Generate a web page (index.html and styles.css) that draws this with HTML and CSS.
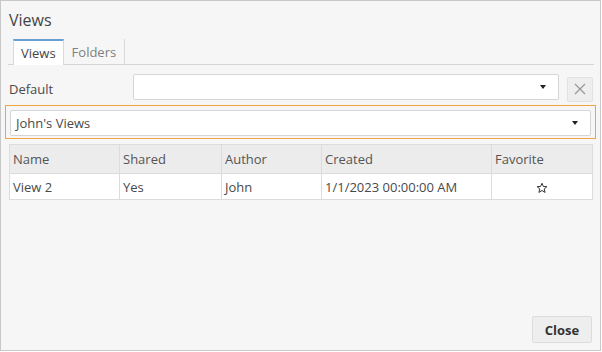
FILE: index.html
```html
<!DOCTYPE html>
<html lang="en">
<head>
  <meta charset="UTF-8">
  <title>Views</title>
  <link rel="stylesheet" href="styles.css">
</head>
<body>
  <div class="dialog">
    <h1 class="dialog-title">Views</h1>

    <ul class="tabs">
      <li class="tab active">Views</li>
      <li class="tab">Folders</li>
    </ul>

    <div class="default-row">
      <label class="default-label">Default</label>
      <div class="select default-select"><span></span><span class="caret"></span></div>
      <button class="clear-btn">
        <svg width="14" height="14" viewBox="0 0 14 14"><path d="M2 2 L12 12 M12 2 L2 12" stroke="#999" stroke-width="1.3" fill="none"/></svg>
      </button>
    </div>

    <div class="folder-box">
      <div class="select"><span>John's Views</span><span class="caret"></span></div>
    </div>

    <table class="views-table">
      <thead>
        <tr>
          <th class="col-name">Name</th>
          <th class="col-shared">Shared</th>
          <th class="col-author">Author</th>
          <th class="col-created">Created</th>
          <th class="col-fav">Favorite</th>
        </tr>
      </thead>
      <tbody>
        <tr>
          <td>View 2</td>
          <td>Yes</td>
          <td>John</td>
          <td>1/1/2023 00:00:00 AM</td>
          <td class="fav-cell">
            <svg class="star" width="12" height="12" viewBox="0 0 24 24"><path d="M12 2.5 L14.8 9 L21.8 9.4 L16.4 13.9 L18.2 20.8 L12 17 L5.8 20.8 L7.6 13.9 L2.2 9.4 L9.2 9 Z" fill="none" stroke="#333" stroke-width="2" stroke-linejoin="round"/></svg>
          </td>
        </tr>
      </tbody>
    </table>

    <div class="footer">
      <button class="close-btn">Close</button>
    </div>
  </div>
</body>
</html>
```

FILE: styles.css
```css
body {
  margin: 0;
  font-family: "Open Sans", Arial, sans-serif;
  font-size: 13px;
  color: #4a4a4a;
}

.dialog {
  width: 599px;
  height: 349px;
  border: 1px solid #c8c8c8;
  background-color: #f6f6f6;
  display: flex;
  flex-direction: column;
}

.dialog-title {
  margin: 0;
  padding: 8px 0 0 8px;
  font-size: 16px;
  font-weight: normal;
  color: #444;
  line-height: 22px;
}

.tabs {
  list-style: none;
  margin: 8px 6px 0 7px;
  padding: 0 0 0 5px;
  display: flex;
  border-bottom: 1px solid #d4d4d4;
  height: 25px;
}

.tab {
  padding: 0 8px;
  line-height: 26px;
  color: #808080;
  border-right: 1px solid #d9d9d9;
  height: 25px;
  box-sizing: border-box;
}

.tab.active {
  background-color: #fff;
  color: #444;
  border-top: 2px solid #6b9fcf;
  border-left: 1px solid #d9d9d9;
  line-height: 24px;
  height: 26px;
  padding: 0 7px;
}

.default-row {
  display: flex;
  align-items: center;
  margin: 8px 0 0 8px;
  height: 28px;
}

.default-label {
  width: 124px;
  padding-top: 4px;
}

.select {
  display: flex;
  align-items: center;
  justify-content: space-between;
  height: 26px;
  box-sizing: border-box;
  background-color: #fff;
  border: 1px solid #d6d6d6;
  border-radius: 2px;
  padding: 0 12px 0 6px;
}

.default-select {
  width: 426px;
}

.caret {
  width: 0;
  height: 0;
  border-left: 3.5px solid transparent;
  border-right: 3.5px solid transparent;
  border-top: 4px solid #222;
}

.clear-btn {
  margin-left: 8px;
  margin-top: 4px;
  width: 26px;
  height: 25px;
  padding: 0;
  border: 1px solid #e2e2e2;
  border-radius: 2px;
  background-color: #eee;
  display: flex;
  align-items: center;
  justify-content: center;
}

.folder-box {
  margin: 4px 4px 0 4px;
  border: 1px solid #f0a43c;
  padding: 4px 4px 2px 4px;
}

.folder-box .select {
  padding-left: 5px;
}

.views-table {
  margin: 5px 0 0 8px;
  width: 584px;
  border-collapse: collapse;
  table-layout: fixed;
  background-color: #fff;
}

.views-table th,
.views-table td {
  box-sizing: border-box;
  border: 1px solid #dcdcdc;
  text-align: left;
  font-weight: normal;
  padding: 0 0 0 3px;
  white-space: nowrap;
}

.views-table th {
  background-color: #ececec;
  color: #555;
  height: 29px;
}

.views-table td {
  height: 26px;
}

.col-name { width: 110px; }
.col-shared { width: 102px; }
.col-author { width: 100px; }
.col-created { width: 170px; }

.views-table td.fav-cell {
  text-align: center;
  padding: 0;
}

.star {
  display: inline-block;
  vertical-align: middle;
}

.footer {
  margin-top: auto;
  display: flex;
  justify-content: flex-end;
  padding: 0 8px 7px 0;
}

.close-btn {
  font-family: "Open Sans", Arial, sans-serif;
  font-size: 13px;
  font-weight: bold;
  color: #333;
  background-color: #eee;
  border: 1px solid #dcdcdc;
  border-radius: 2px;
  width: 60px;
  height: 27px;
  padding: 0;
}
```
